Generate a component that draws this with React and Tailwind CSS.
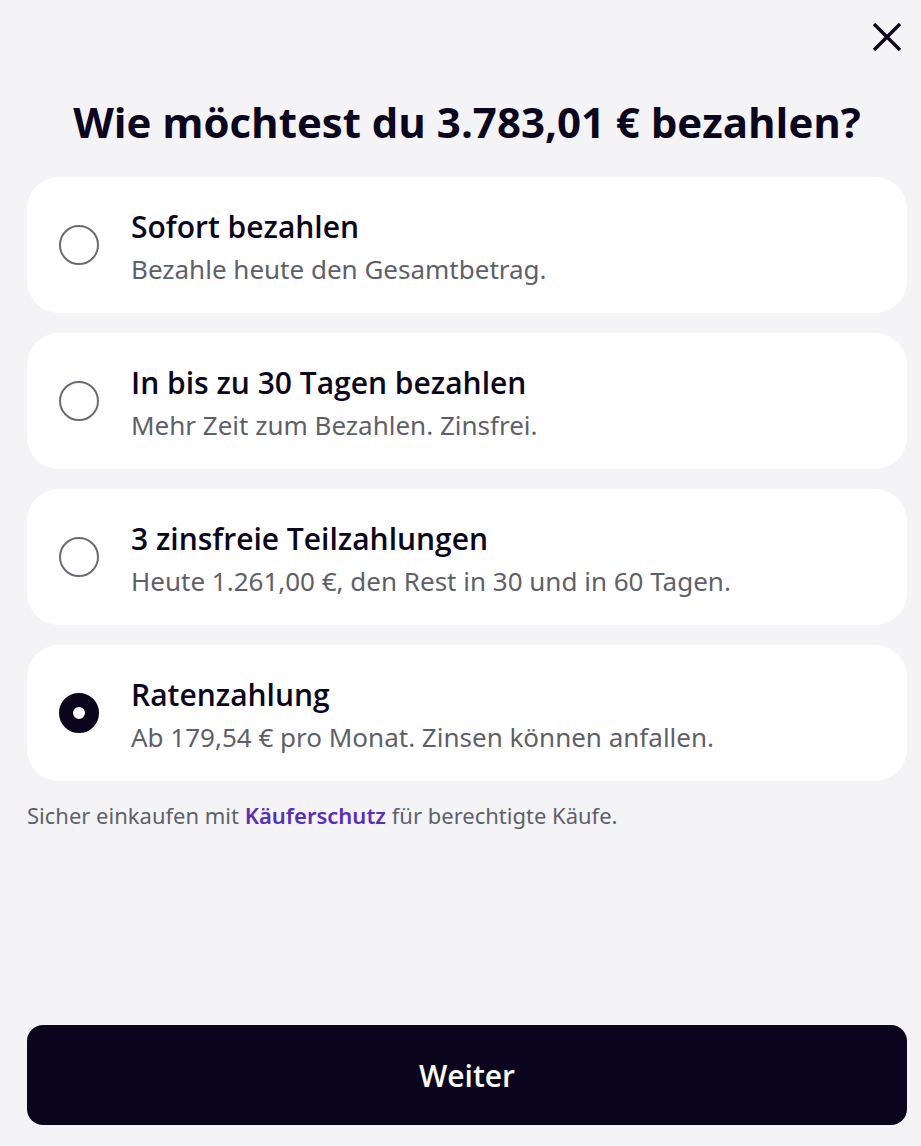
import { useState } from "react";

const options = [
  { id: "now", title: "Sofort bezahlen", text: "Bezahle heute den Gesamtbetrag." },
  { id: "later", title: "In bis zu 30 Tagen bezahlen", text: "Mehr Zeit zum Bezahlen. Zinsfrei." },
  { id: "split", title: "3 zinsfreie Teilzahlungen", text: "Heute 1.261,00 €, den Rest in 30 und in 60 Tagen." },
  { id: "rates", title: "Ratenzahlung", text: "Ab 179,54 € pro Monat. Zinsen können anfallen." },
];

function PaymentOption({ option, checked, onSelect }) {
  return (
    <label
      htmlFor={option.id}
      className="flex min-h-34 cursor-pointer items-center gap-8 rounded-[32px] bg-white px-8 py-5"
    >
      <input
        type="radio"
        id={option.id}
        name="payment"
        checked={checked}
        onChange={onSelect}
        className="size-10 shrink-0 cursor-pointer appearance-none rounded-full border-2 border-[#6d6a78] bg-white checked:border-[14px] checked:border-[#0b051d]"
      />
      <span className="flex flex-col pt-1">
        <span className="text-[30px] leading-[44px] font-semibold">{option.title}</span>
        <span className="font-['Noto_Sans',sans-serif] text-[26px] leading-[40px] text-[#5f5f6a]">{option.text}</span>
      </span>
    </label>
  );
}

export default function App() {
  const [selected, setSelected] = useState("rates");

  return (
    <div className="flex min-h-screen flex-col bg-[#f4f4f7] pr-3.5 pb-[21px] pl-[27px] font-['Open_Sans',sans-serif] text-[#0b051d]">
      <header className="flex justify-end pt-4">
        <button type="button" aria-label="Schließen" className="flex size-10 cursor-pointer items-center justify-center">
          <svg viewBox="0 0 40 40" className="size-10" fill="none" stroke="currentColor" strokeWidth="3.4">
            <path d="M7 8l26 26M33 8L7 34" />
          </svg>
        </button>
      </header>

      <main className="flex grow flex-col">
        <h1 id="question" className="mt-[38px] text-center text-[42px] leading-[56px] font-bold">
          Wie möchtest du 3.783,01 € bezahlen?
        </h1>

        <fieldset aria-labelledby="question" className="mt-[27px] flex flex-col gap-5">
          {options.map((option) => (
            <PaymentOption
              key={option.id}
              option={option}
              checked={selected === option.id}
              onSelect={() => setSelected(option.id)}
            />
          ))}
        </fieldset>

        <p className="mt-[18px] font-['Noto_Sans',sans-serif] text-[22px] leading-[32px] text-[#5f5f6a]">
          Sicher einkaufen mit{" "}
          <a href="#kaeuferschutz" className="font-semibold text-[#5a2fb8]">
            Käuferschutz
          </a>{" "}
          für berechtigte Käufe.
        </p>
      </main>

      <button type="button" className="h-25 w-full cursor-pointer rounded-2xl bg-[#0b051d] text-[30px] font-semibold text-white">
        Weiter
      </button>
    </div>
  );
}
